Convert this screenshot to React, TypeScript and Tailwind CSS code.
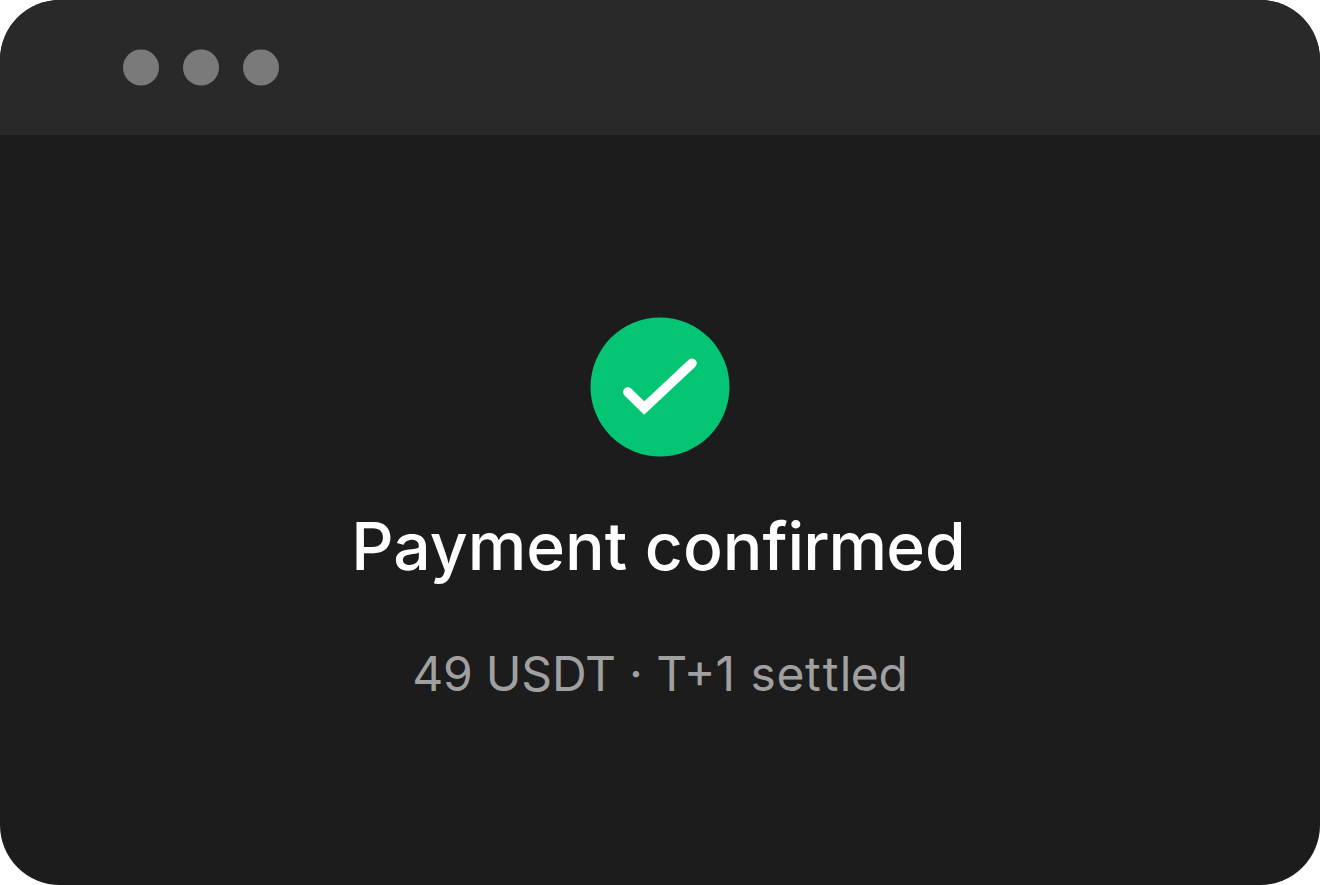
export default function App() {
  return (
    <main className="flex h-[885px] w-[1320px] flex-col overflow-hidden rounded-[60px] bg-[#1c1c1c] font-['Inter',sans-serif]">
      <header className="flex h-[135px] shrink-0 bg-[#292929] pl-[123px]">
        <svg className="h-[135px] w-[156px]" viewBox="0 0 156 135" fill="#7a7a7a" aria-hidden="true">
          <circle cx="18" cy="67.5" r="18" />
          <circle cx="78" cy="67.5" r="18" />
          <circle cx="138" cy="67.5" r="18" />
        </svg>
      </header>
      <section className="flex flex-1 flex-col items-center pt-[182px]">
        <svg className="size-[140px]" viewBox="0 0 140 140" fill="none" aria-hidden="true">
          <circle cx="70" cy="70" r="69.5" fill="#04c574" />
          <path d="M37.8 75 L54.2 91 L102 46.2" stroke="#fff" strokeWidth="9.6" strokeLinecap="round" />
        </svg>
        <h1 className="mt-[49px] mr-[3px] text-[66px] leading-[80px] font-medium whitespace-nowrap text-white">
          Payment conf<span className="tracking-[-1px]">irm</span>ed
        </h1>
        <p className="mt-[59px] text-[48px] leading-[58px] whitespace-nowrap text-[#a0a0a0]">
          <span className="tracking-[-0.2px]">49 USDT </span>· T+1<span className="tracking-[2px]"> </span>
          <span className="tracking-[0.5px]">se</span>
          <span className="tracking-[2px]">t</span>
          <span className="tracking-[1.3px]">t</span>
          <span className="tracking-[-0.4px]">le</span>d
        </p>
      </section>
    </main>
  );
}
